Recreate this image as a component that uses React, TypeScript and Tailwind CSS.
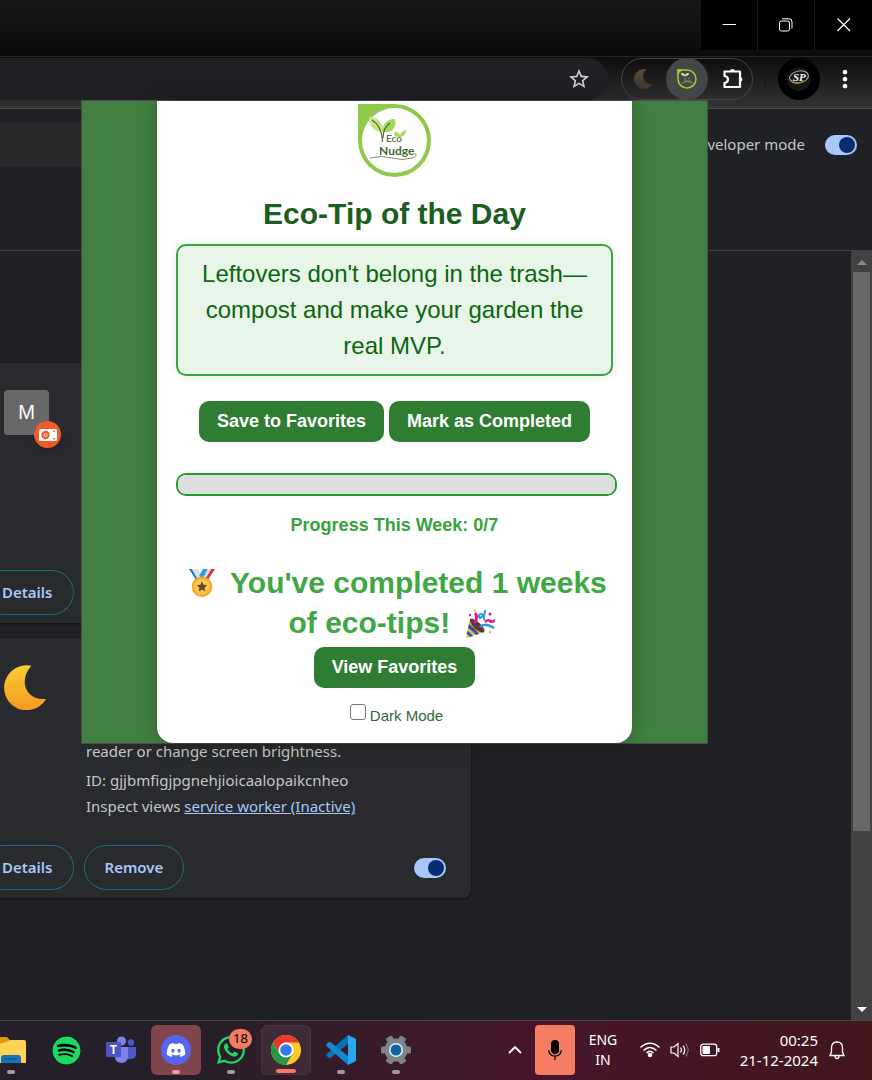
import { useState } from 'react'
import type { ReactNode } from 'react'
import { FaDiscord, FaSpotify, FaWhatsapp } from 'react-icons/fa'
import { MdMoreVert, MdStarBorder } from 'react-icons/md'

const toggleClass =
    "relative h-5 w-8 shrink-0 appearance-none rounded-full bg-[#5f6368] checked:bg-[#a8c7fa] before:absolute before:left-[2px] before:top-[2px] before:size-4 before:rounded-full before:bg-[#062e6f] before:content-[''] checked:before:left-[14px]"

const outlineButton =
    "h-[45px] rounded-full border border-[#1d6f80] px-5 text-[15px] font-semibold text-[#a8c7fa]"

const greenButton =
    "h-[41px] rounded-[10px] bg-[#2e7d32] px-[18px] text-[18px] font-bold text-white"

function Moon({ className, from, to }: { className: string, from: string, to: string }) {
    return (
        <svg viewBox="0 0 45 45" className={className} aria-hidden="true">
            <defs>
                <linearGradient id={`moon-${from}`} x1="0" y1="0" x2="0" y2="1">
                    <stop offset="0" stopColor={`#${from}`} />
                    <stop offset="1" stopColor={`#${to}`} />
                </linearGradient>
            </defs>
            <path d="M26 0.500A22.500 22.500 0 1 0 41.500 35Q42.500 33.500 40.500 34C23 35 14 17 26.500 1.800Q27.800 0.200 26 0.500Z" fill={`url(#moon-${from})`} />
        </svg>
    )
}

function EcoLogo() {
    return (
        <svg viewBox="0 0 73 73" className="size-[73px]" role="img" aria-label="Eco Nudge">
            <path d="M0 0H36.500A36.500 36.500 0 1 1 0 36.500Z" fill="#8fca4b" />
            <circle cx="36.500" cy="36.500" r="32.500" fill="#fff" />
            <path d="M11 13C20 13 26 19 25 28C16 28 11 22 11 13Z" fill="#c5e487" />
            <path d="M37 15C39 24 34 29 25 28C24 20 29 15 37 15Z" fill="#a9d65d" />
            <path d="M36 31C36 27 39 26 42 31C44 26 48 26 48 26C48 31 45 33 41 33C39 33 37 32 36 31Z" fill="#b2da67" />
            <path d="M14 16Q24 22 24.500 38M32 19Q25 24 25 34" fill="none" stroke="#4d6b35" strokeWidth="1.200" />
            <path d="M12 54Q24 51 34 54T54 54Q60 52 57 49" fill="none" stroke="#66834d" strokeWidth="0.900" />
            <text x="28" y="38" fontSize="10" fontWeight="600" fill="#53743e" fontFamily="Lato, sans-serif">Eco</text>
            <text x="21" y="51" fontSize="12" fontWeight="700" fill="#416b2c" fontFamily="Lato, sans-serif">Nudge</text>
        </svg>
    )
}

function Medal() {
    return (
        <svg viewBox="0 0 30 32" className="mx-[6px] inline-block h-8 w-7 align-[-6px]" role="img" aria-label="Medal">
            <path d="M1 1H8L16 14L11 16Z" fill="#1673bb" />
            <path d="M4 1H11L17 12L12 15Z" fill="#d9e2eb" />
            <path d="M22 1H29L19 16L13 14Z" fill="#e3303c" />
            <path d="M19 1H25L17 14L13 12Z" fill="#d9e2eb" />
            <path d="M16 1H21L15 13L12 8Z" fill="#25a3df" />
            <circle cx="15" cy="20" r="11" fill="#f4a72e" />
            <circle cx="15" cy="20" r="8.500" fill="#ffc747" />
            <path d="M15 14.500L16.700 18L20.500 18.400L17.700 21.100L18.500 25L15 23L11.500 25L12.300 21.100L9.500 18.400L13.300 18Z" fill="#674238" />
        </svg>
    )
}

function PartyPopper() {
    return (
        <svg viewBox="0 0 30 30" className="mx-[6px] inline-block size-[30px] align-[-6px]" role="img" aria-label="Party popper">
            <path d="M5 10Q13 13 19 23L1 29Z" fill="#f5b93f" />
            <path d="M4 15Q10 19 14 25L11 26Q8 22 3 19Z" fill="#2557b3" />
            <path d="M2.500 22Q6 24 8 27L5 28Q4 26 1.500 25Z" fill="#2557b3" />
            <path d="M5 10C10 8 22 20 19 23C16 26 3 15 5 10Z" fill="#5b3a35" />
            <path d="M10 4Q13 7 10 14" fill="none" stroke="#e7178c" strokeWidth="3" />
            <path d="M20 1Q21 6 15 9Q12 6 16 5Q20 6 19 11" fill="none" stroke="#2799df" strokeWidth="2" />
            <path d="M15 18Q20 13 29 19" fill="none" stroke="#2799df" strokeWidth="2.500" />
            <path d="M20 13Q23 10 25 12T30 11" fill="none" stroke="#e7178c" strokeWidth="2.500" />
            <circle cx="5" cy="6" r="1.200" fill="#e7178c" />
            <circle cx="10" cy="1.500" r="1.200" fill="#f5b93f" />
            <circle cx="25" cy="5" r="1.500" fill="#e7178c" />
            <circle cx="25" cy="23" r="1.200" fill="#f5b93f" />
        </svg>
    )
}

function TitleBar() {
    return (
        <div className="flex h-[57px] items-start justify-end border-b border-[#242424] bg-linear-to-b from-[#171717] to-[#0b0b0b]">
            <button aria-label="Minimize" className="flex h-[50px] w-14 items-center justify-center bg-black text-white">
                <svg viewBox="0 0 14 14" className="size-[14px]"><path d="M0.500 6.500H14" stroke="currentColor" /></svg>
            </button>
            <button aria-label="Restore" className="flex h-[50px] w-[58px] items-center justify-center border-x border-[#1b1b1b] bg-black text-white">
                <svg viewBox="0 0 14 14" className="size-[14px]" fill="none" stroke="currentColor">
                    <rect x="0.500" y="3" width="10" height="10" rx="2" />
                    <path d="M3 0.800H10Q13 0.800 13 4V10.500" />
                </svg>
            </button>
            <button aria-label="Close" className="flex h-[50px] w-[57px] items-center justify-center bg-black text-white">
                <svg viewBox="0 0 14 14" className="size-[14px]"><path d="M0.500 0.500L13 13M13 0.500L0.500 13" stroke="currentColor" strokeWidth="1.200" /></svg>
            </button>
        </div>
    )
}

function Toolbar() {
    return (
        <div className="flex h-[52px] items-start border-b border-[#48494b] bg-linear-to-b from-[#0d0d0d] to-[#343434] pt-px text-white">
            <div className="flex h-[42px] flex-1 items-center justify-end rounded-r-full bg-[#1f2024] pr-[17px]">
                <button aria-label="Bookmark this tab" className="text-[#d2d2d2]"><MdStarBorder className="size-6" /></button>
            </div>
            <div className="ml-[13px] flex h-[42px] w-[132px] items-center rounded-full border border-[#454545]">
                <button aria-label="Night mode" className="flex w-[44px] justify-center">
                    <Moon className="size-5" from="5a4b3d" to="40342b" />
                </button>
                <button aria-label="Eco Nudge" className="flex size-[42px] items-center justify-center rounded-full bg-[#454647]">
                    <svg viewBox="0 0 20 20" className="size-5">
                        <path d="M1 1H10A9 9 0 1 1 1 10Z" fill="none" stroke="#9ad42f" strokeWidth="1.500" />
                        <path d="M0.500 0.500H7L3 3L0.500 7Z" fill="#9ad42f" />
                        <path d="M4 4Q8 4 8 7Q4 7 4 4ZM8 7Q8 4 12 4Q12 7 8 7Z" fill="#dff4c1" />
                        <path d="M8 7V11M11 10L13 9M5 14Q10 11 16 14M7 12H14" stroke="#86a85b" strokeWidth="0.800" fill="none" />
                    </svg>
                </button>
                <button aria-label="Extensions" className="flex flex-1 justify-center pl-[6px]">
                    <svg viewBox="0 0 22 22" className="size-[22px]">
                        <path d="M2.500 3.500H18V19H2.500V15Q6 14.500 6 11.500T2.500 8Z" fill="none" stroke="currentColor" strokeWidth="2.200" strokeLinejoin="round" />
                        <path d="M8 3.500A2.500 2.500 0 0 1 13 3.500ZM18 9A2.500 2.500 0 0 1 18 14Z" fill="currentColor" />
                    </svg>
                </button>
            </div>
            <span className="ml-3 mt-3 h-[18px] w-px bg-[#161616]" />
            <button aria-label="Profile" className="ml-3 flex size-[42px] items-center justify-center rounded-full bg-black">
                <svg viewBox="0 0 24 24" className="size-6">
                    <circle cx="12" cy="12" r="12" fill="#151515" />
                    <ellipse cx="12" cy="10" rx="9.500" ry="6" fill="none" stroke="#b9b6b0" transform="rotate(-12 12 10)" />
                    <path d="M4 13Q9 18 17 14" fill="none" stroke="#b88232" />
                    <text x="6" y="14" fontSize="11" fontWeight="700" fontStyle="italic" fill="#fff" fontFamily="Liberation Serif, serif">SP</text>
                </svg>
            </button>
            <button aria-label="Menu" className="flex h-[42px] w-[50px] items-center justify-center"><MdMoreVert className="size-7" /></button>
            <span className="w-[2px]" />
        </div>
    )
}

function ExtensionCard({ icon, children, removable }: { icon: ReactNode, children?: ReactNode, removable?: boolean }) {
    return (
        <article className="flex min-h-[260px] flex-col rounded-lg bg-[#292a2d] pb-2 shadow-[0_1px_3px_#00000080]">
            <div className="flex gap-[37px] pl-[33px] pt-[27px]">
                {icon}
                <div className="pt-[73px] text-[15px] leading-[26px] text-[#c4c7c5]">{children}</div>
            </div>
            <div className="mt-auto flex items-center gap-[10px] pl-[10px] pr-[25px]">
                <button className={outlineButton}>Details</button>
                {removable && <button className={outlineButton}>Remove</button>}
                {removable && <input type="checkbox" defaultChecked aria-label="Enabled" className={`${toggleClass} ml-auto`} />}
            </div>
        </article>
    )
}

function Scrollbar() {
    return (
        <div className="flex w-[21px] shrink-0 flex-col items-center bg-[#424242]">
            <svg viewBox="0 0 20 21" className="h-[21px] w-5"><path d="M5 14L10 9L15 14Z" fill="#8b8b8b" /></svg>
            <div className="w-[17px] grow-10 bg-[#686868]" />
            <div className="grow-3" />
            <svg viewBox="0 0 20 21" className="h-[21px] w-5"><path d="M5 8L10 13L15 8Z" fill="#fff" /></svg>
        </div>
    )
}

function EcoPopup() {
    const [completed] = useState(0)
    const [dark, setDark] = useState(false)

    return (
        <section className="absolute right-[164px] top-[100px] w-[627px] border border-[#4a4d4a] bg-[#418041] px-[75px] font-['Liberation_Sans',Arial,sans-serif]">
            <div className="flex flex-col items-center rounded-b-[16px] bg-white px-[19px] pb-[15px] pt-[3px] text-center shadow-[0_0_20px_#00000040]">
                <EcoLogo />
                <h1 className="mt-[19px] text-[30px] font-bold leading-9 text-[#1b5e20]">Eco-Tip of the Day</h1>
                <p className="mt-3 w-full rounded-[10px] border-2 border-[#3ba33f] bg-[#e8f5e9] px-5 py-[10px] text-[24px] leading-9 text-[#0d650f] shadow-[0_0_10px_#4caf5033]">
                    Leftovers don't belong in the trash—compost and make your garden the real MVP.
                </p>
                <div className="mt-[25px] flex gap-[5px]">
                    <button className={greenButton}>Save to Favorites</button>
                    <button className={greenButton}>Mark as Completed</button>
                </div>
                <progress
                    value={completed}
                    max={7}
                    aria-label="Weekly progress"
                    className="mt-[31px] h-[23px] w-[calc(100%+4px)] appearance-none self-start overflow-hidden rounded-[10px] border-2 border-[#27992b] bg-[#dedede] [&::-webkit-progress-bar]:bg-[#dedede] [&::-webkit-progress-value]:bg-[#4caf50]"
                />
                <p className="mt-[17px] text-[18px] font-bold leading-6 text-[#36a33b]">Progress This Week: {completed}/7</p>
                <h2 className="mt-[26px] text-[30px] font-bold leading-10 text-[#3fa744]">
                    <Medal /> You've completed 1 weeks<br />of eco-tips! <PartyPopper />
                </h2>
                <button className={`${greenButton} mt-1`}>View Favorites</button>
                <label className="mt-4 flex h-6 items-start gap-1 pl-1 text-[15px] leading-6 text-[#2e6b38]">
                    <input
                        type="checkbox"
                        checked={dark}
                        onChange={(e) => setDark(e.target.checked)}
                        className="size-4 appearance-none rounded-[3px] border border-[#767676] bg-white checked:bg-[#2e7d32]"
                    />
                    Dark Mode
                </label>
            </div>
        </section>
    )
}

function TaskButton({ label, children, dot = "bg-[#a09ba3] w-2", className = "" }: { label: string, children: ReactNode, dot?: string, className?: string }) {
    return (
        <button aria-label={label} className={`relative flex size-[50px] shrink-0 items-center justify-center rounded-md ${className}`}>
            {children}
            {dot && <span className={`absolute bottom-px left-1/2 h-1 -translate-x-1/2 rounded-full ${dot}`} />}
        </button>
    )
}

function Taskbar() {
    return (
        <footer className="flex h-[60px] items-start overflow-hidden border-t border-[#4b474c] bg-linear-to-r from-[#241f28] from-20% via-[#46152c] via-60% to-[#43161a] pt-1 text-white">
            <nav aria-label="Taskbar" className="-ml-[14px] flex gap-[5px]">
                <TaskButton label="File Explorer">
                    <svg viewBox="0 0 32 28" className="h-7 w-8">
                        <path d="M1 4Q1 1 4 1H12L15 4V10H1Z" fill="#d99a14" />
                        <path d="M1 8Q10 8 15 4H29Q31 4 31 6V27H1Z" fill="#ffd454" />
                        <path d="M6 27V22Q6 19 9 19H23Q26 19 26 22V27Z" fill="#1673bc" />
                        <path d="M10 23H22" stroke="#074d83" />
                    </svg>
                </TaskButton>
                <TaskButton label="Spotify" dot="">
                    <span className="rounded-full bg-black"><FaSpotify className="size-[29px] text-[#1ed760]" /></span>
                </TaskButton>
                <TaskButton label="Teams" dot="">
                    <svg viewBox="0 0 30 28" className="h-7 w-[30px]">
                        <circle cx="15.500" cy="5" r="4.500" fill="#7b83eb" />
                        <circle cx="25" cy="6.500" r="3.200" fill="#5059c9" />
                        <path d="M20 11H30V18Q30 23 24 23H20Z" fill="#5059c9" />
                        <path d="M9 11H22V20Q22 27 15.500 27T9 20Z" fill="#7b83eb" />
                        <rect x="0" y="6" width="15" height="15" rx="1" fill="#4b53bc" />
                        <text x="4" y="18" fontSize="12" fontWeight="700" fill="#fff" fontFamily="Open Sans, sans-serif">T</text>
                    </svg>
                </TaskButton>
                <TaskButton label="Discord" className="bg-[#80454c]" dot="bg-[#ff99a8] w-2">
                    <span className="flex size-[30px] items-center justify-center rounded-full bg-[#5865f2]"><FaDiscord className="size-5" /></span>
                </TaskButton>
                <TaskButton label="WhatsApp">
                    <FaWhatsapp className="size-8 text-[#25d366]" />
                    <span className="absolute right-1 top-1 flex h-5 w-[23px] items-center justify-center rounded-full bg-[#f47d64] text-[13px] text-black">18</span>
                </TaskButton>
                <TaskButton label="Chrome" className="border border-[#4b343f] bg-[#402936]" dot="bg-[#f47d64] w-5">
                    <svg viewBox="0 0 30 30" className="size-[30px]">
                        <circle cx="15" cy="15" r="15" fill="#ffc928" />
                        <path d="M2 7.500A15 15 0 0 1 28 7.500H15L8.500 18.700Z" fill="#e53b2f" />
                        <path d="M2 7.500A15 15 0 0 0 15 30L21.500 18.700L15 22L8.500 18.700Z" fill="#289847" />
                        <circle cx="15" cy="15" r="7.500" fill="#fff" />
                        <circle cx="15" cy="15" r="5.800" fill="#3479e8" />
                    </svg>
                </TaskButton>
                <TaskButton label="Visual Studio Code">
                    <svg viewBox="0 0 30 30" className="size-[30px]">
                        <path d="M22 0V9L5 22.500Q4 23.500 3 23L1 21.500Q-0.500 20 1 18.500Z" fill="#0b70b8" />
                        <path d="M22 30V21L5 7.500Q4 6.500 3 7L1 8.500Q-0.500 10 1 11.500Z" fill="#1587ce" />
                        <path d="M22 0L30 4V26L22 30Z" fill="#29a8f2" />
                    </svg>
                </TaskButton>
                <TaskButton label="Settings">
                    <svg viewBox="0 0 30 30" className="size-[30px]">
                        <g fill="#7d8589">
                            <circle cx="15" cy="15" r="11.500" />
                            <rect x="0" y="11.500" width="30" height="7" rx="1.500" />
                            <rect x="0" y="11.500" width="30" height="7" rx="1.500" transform="rotate(60 15 15)" />
                            <rect x="0" y="11.500" width="30" height="7" rx="1.500" transform="rotate(120 15 15)" />
                        </g>
                        <circle cx="15" cy="15" r="7" fill="#e6eef5" />
                        <circle cx="15" cy="15" r="5.500" fill="#1262a8" />
                    </svg>
                </TaskButton>
            </nav>
            <div className="ml-auto flex items-center font-['Noto_Sans',sans-serif]">
                <button aria-label="Hidden icons" className="mr-[13px]">
                    <svg viewBox="0 0 14 8" className="h-2 w-[14px]"><path d="M1 7L7 1L13 7" fill="none" stroke="currentColor" strokeWidth="1.800" /></svg>
                </button>
                <button aria-label="Microphone" className="flex h-[50px] w-10 items-center justify-center rounded bg-[#f47d64] text-black">
                    <svg viewBox="0 0 14 20" className="h-5 w-[14px]">
                        <rect x="3" y="0" width="8" height="14" rx="4" fill="currentColor" />
                        <path d="M0.700 10Q1 16 7 16T13.300 10M7 16V20" fill="none" stroke="currentColor" strokeWidth="1.200" />
                    </svg>
                </button>
                <button className="w-14 text-center text-[14px] leading-5">ENG<br />IN</button>
                <button aria-label="Network, volume and battery" className="ml-[9px] flex items-center gap-[10px]">
                    <svg viewBox="0 0 20 16" className="h-4 w-5" fill="none" stroke="currentColor" strokeWidth="1.500">
                        <path d="M0.500 5.500Q10 -3 19.500 5.500M3.500 8.500Q10 2.500 16.500 8.500M6.500 11Q10 7.500 13.500 11" />
                        <circle cx="10" cy="13" r="1.500" fill="currentColor" />
                    </svg>
                    <svg viewBox="0 0 20 16" className="h-4 w-5" fill="none" stroke="currentColor" strokeWidth="1.200">
                        <path d="M1 5H4L8 1.500V14.500L4 11H1ZM10.500 5.500Q12.500 8 10.500 10.500M13 3.500Q16.500 8 13 12.500" />
                        <path d="M15.500 1.500Q21 8 15.500 14.500" stroke="#87666c" />
                    </svg>
                    <svg viewBox="0 0 20 14" className="h-[14px] w-5">
                        <rect x="0.700" y="1.200" width="16" height="11.500" rx="2.500" fill="none" stroke="currentColor" strokeWidth="1.300" />
                        <rect x="2.500" y="3" width="7.500" height="8" rx="1" fill="currentColor" />
                        <path d="M18.500 5V9" stroke="currentColor" strokeWidth="2" />
                    </svg>
                </button>
                <button className="w-[98px] text-right text-[15px] leading-5">00:25<br />21-12-2024</button>
                <button aria-label="Notifications" className="ml-[11px] mr-[27px]">
                    <svg viewBox="0 0 16 19" className="h-[19px] w-4" fill="none" stroke="currentColor" strokeWidth="1.300">
                        <path d="M1 14.500L2.500 11V7Q2.500 1 8 1T13.500 7V11L15 14.500ZM6 15Q6 17.500 8 17.500T10 15" />
                    </svg>
                </button>
            </div>
        </footer>
    )
}

export default function App() {
    return (
        <div className="relative flex min-h-screen flex-col overflow-hidden bg-[#202124] font-['Noto_Sans','Open_Sans',sans-serif]">
            <TitleBar />
            <Toolbar />
            <header className="flex h-[142px] items-start border-b border-[#3f4042] pt-[13px]">
                <div className="h-[45px] w-1/2 bg-[#292929]" />
                <label className="ml-auto mr-[15px] flex h-[45px] items-center gap-5 text-[15px] text-[#c4c7c5]">
                    Developer mode
                    <input type="checkbox" defaultChecked className={toggleClass} />
                </label>
            </header>
            <div className="flex flex-1">
                <main className="flex-1">
                    <div className="-ml-[29px] flex w-[500px] flex-col gap-[15px] pt-28">
                        <ExtensionCard
                            icon={
                                <div className="relative flex size-[45px] items-center justify-center rounded bg-[#686868] text-[19px] text-white">
                                    M
                                    <span className="absolute -bottom-[13px] -right-[12px] flex size-[27px] items-center justify-center rounded-full bg-[#f15a29] shadow-md">
                                        <svg viewBox="0 0 18 12" className="h-3 w-[18px]">
                                            <rect width="18" height="12" rx="1.500" fill="#fff" />
                                            <circle cx="6.500" cy="6" r="4.200" fill="#f15a29" />
                                            <circle cx="6.500" cy="6" r="1.500" fill="none" stroke="#fff" strokeWidth="0.800" />
                                            <path d="M15 1.500V3M15 9V10.500" stroke="#9b321b" strokeWidth="1.200" />
                                        </svg>
                                    </span>
                                </div>
                            }
                        />
                        <ExtensionCard removable icon={<Moon className="size-[45px]" from="fcca35" to="f39a20" />}>
                            <p className="mb-[3px]">reader or change screen brightness.</p>
                            <p>ID: gjjbmfigjpgnehjioicaalopaikcnheo</p>
                            <p>Inspect views <a href="#worker" className="text-[#a8c7fa] underline">service worker (Inactive)</a></p>
                        </ExtensionCard>
                    </div>
                </main>
                <Scrollbar />
            </div>
            <Taskbar />
            <EcoPopup />
        </div>
    )
}
